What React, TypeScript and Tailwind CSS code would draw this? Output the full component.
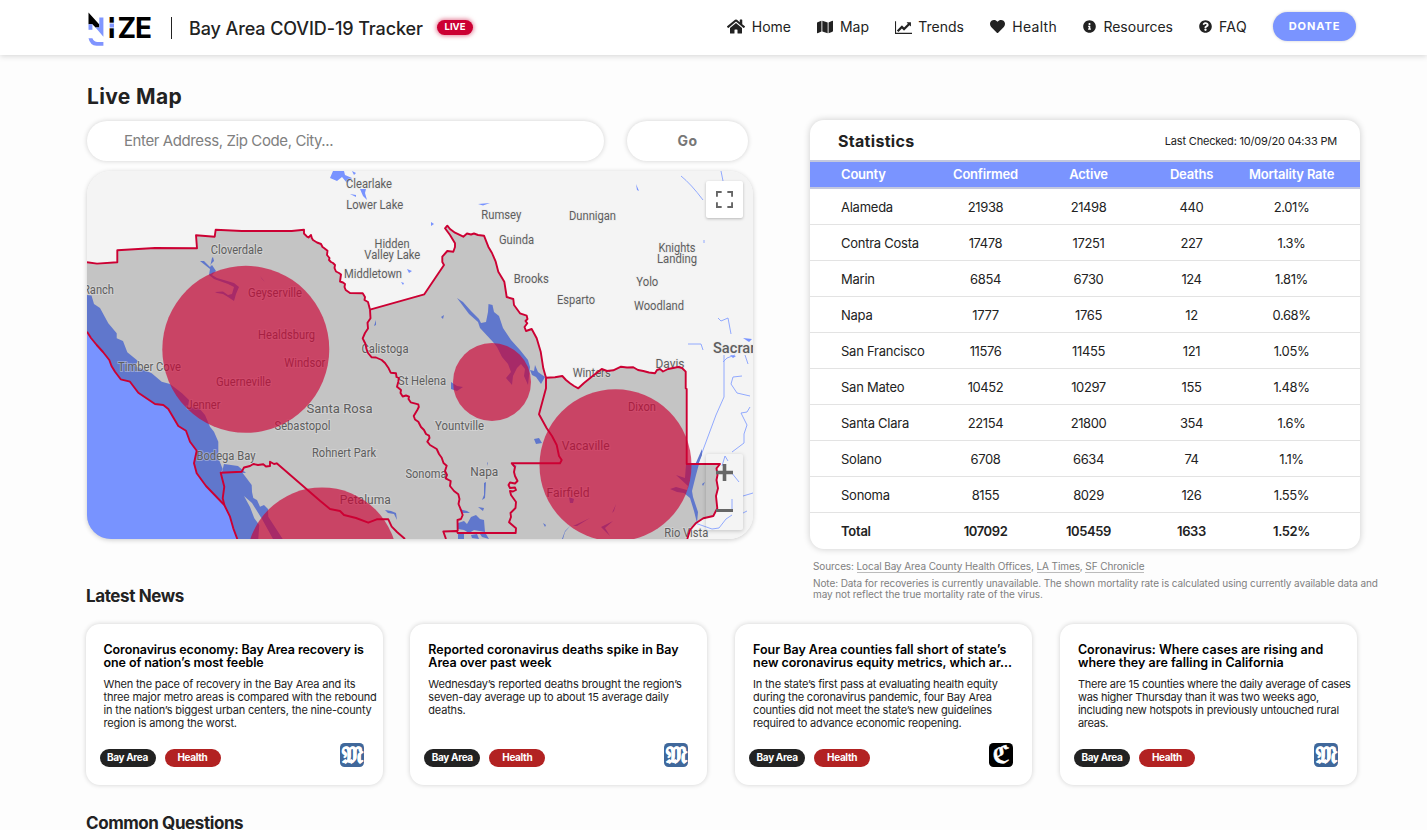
import React from "react";
import { FaHeart, FaHome, FaInfoCircle, FaMap, FaQuestionCircle } from "react-icons/fa";

function ChartIcon({ className }: { className?: string }) {
  return (
    <svg viewBox="0 0 2048 1664" className={className} fill="currentColor">
      <path d="M2048 1536v128h-2048v-1536h128v1408h1920zM1920 288v435q0 21-19.5 29.5t-35.5-7.5l-121-121-633 633q-10 10-23 10t-23-10l-233-233-416 416-192-192 585-585q10-10 23-10t23 10l233 233 464-464-121-121q-16-16-7.5-35.5t29.5-19.5h435q14 0 23 9t9 23z" />
    </svg>
  );
}

function Logo() {
  return (
    <svg viewBox="0 0 64 36" className="h-9 w-16 overflow-visible" aria-label="NIZE">
      <path d="M1.5 2.5 L12.3 14.5 L12.3 17.6 L8.5 17.6 L5.4 14.3 L1.5 14.3 Z" fill="#000" />
      <path d="M1.5 14.3 L5.4 14.3 L5.4 19.8 L1.5 19.8 Z" fill="#7f96ff" />
      <path d="M12.3 7.5 L16.4 7.5 L16.4 26.8 L8.5 17.6 L12.3 17.6 Z" fill="#7f96ff" />
      <path d="M1.5 28.2 L5.4 28.2 Q7 32 10.6 32 L16.4 32 L16.4 35.8 L9.5 35.8 Q3 35.2 1.5 28.2 Z" fill="#8094ff" />
      <text y="28" x="20.7 30.4 47.9" fontFamily="Inter, sans-serif" fontWeight="700" fontSize="28">
        IZE
      </text>
      <rect x="22" y="12.7" width="6" height="5.6" fill="#fff" />
      <rect x="22.7" y="13.5" width="4.3" height="4" fill="#7f96ff" />
    </svg>
  );
}

function Header() {
  return (
    <header className="relative z-10 flex h-[55px] shrink-0 items-center bg-white pr-[71px] pl-[87px] shadow-[0_1px_6px_rgba(0,0,0,0.17)]">
      <Logo />
      <div className="ml-5 h-[22px] w-px bg-[#222]" />
      <h1 className="ml-[17px] w-[248px] pt-px text-[18px] font-medium tracking-[-0.1px] whitespace-nowrap">
        Bay Area COVID-19 Tracker
      </h1>
      <span className="mb-px flex h-[15px] w-[36px] items-center justify-center rounded-full bg-[#cc0033] text-[9.5px] leading-none font-bold text-white shadow-[0_0_4px_1px_rgba(204,0,51,0.5)]">
        LIVE
      </span>
      <nav className="mb-[2px] ml-auto flex items-center gap-[26px] text-[14px] whitespace-nowrap">
        <a className="flex w-16 items-center justify-between">
          <FaHome className="h-[17px] w-[18px]" />
          <span>Home</span>
        </a>
        <a className="flex w-[52px] items-center justify-between">
          <FaMap className="h-4 w-[16px]" />
          <span>Map</span>
        </a>
        <a className="flex w-[69px] items-center justify-between">
          <ChartIcon className="h-[14px] w-[17px]" />
          <span>Trends</span>
        </a>
        <a className="flex w-[67px] items-center justify-between">
          <FaHeart className="size-[15px]" />
          <span className="tracking-[0.3px]">Health</span>
        </a>
        <a className="flex w-[90px] items-center justify-between">
          <FaInfoCircle className="size-[13px]" />
          <span>Resources</span>
        </a>
        <a className="flex w-12 items-center justify-between">
          <FaQuestionCircle className="size-[13px]" />
          <span className="tracking-[0.4px]">FAQ</span>
        </a>
        <button className="mb-px h-[29px] w-[83px] rounded-full bg-[#7a94ff] text-[11px] font-bold tracking-[0.9px] text-white shadow-[0_0_3px_rgba(0,0,0,0.2)]">
          DONATE
        </button>
      </nav>
    </header>
  );
}

type Label = [name: string, cx: number, cy: number, width: number, size?: number];

const labels: Label[] = [
  ["Clearlake", 369, 184, 46],
  ["Lower Lake", 374.7, 205, 57],
  ["Rumsey", 501.3, 215, 40],
  ["Dunnigan", 592.5, 216, 47],
  ["Guinda", 516.5, 240.5, 35],
  ["Hidden", 392, 244, 35],
  ["Valley Lake", 392.3, 255, 56],
  ["Middletown", 373, 274, 58],
  ["Knights", 677, 248, 37],
  ["Landing", 677, 259, 40],
  ["Brooks", 531.3, 279.5, 35],
  ["Yolo", 647.3, 282, 22],
  ["Esparto", 576, 300, 38],
  ["Woodland", 659, 306, 50],
  ["Cloverdale", 236.7, 250.5, 52],
  ["Geyserville", 275, 293.5, 54],
  ["Ranch", 98.5, 290, 31],
  ["Healdsburg", 286.6, 335.5, 57],
  ["Windsor", 304.8, 363, 41],
  ["Timber Cove", 149.5, 367, 63],
  ["Guerneville", 243.5, 382.5, 55],
  ["Jenner", 203.5, 405.5, 34],
  ["Santa Rosa", 339.5, 409, 66, 13.5],
  ["Sebastopol", 302.5, 426.5, 56],
  ["Bodega Bay", 226, 456, 59],
  ["Rohnert Park", 344, 453.5, 64],
  ["Petaluma", 365.3, 500, 51],
  ["Sonoma", 426, 474, 41],
  ["Napa", 484.3, 471.5, 28, 13],
  ["Yountville", 459.5, 426.5, 49],
  ["St Helena", 422, 381, 48],
  ["Calistoga", 385, 349.5, 47],
  ["Winters", 591.7, 373, 38],
  ["Davis", 670, 364, 29],
  ["Dixon", 642, 407.5, 28],
  ["Vacaville", 585.7, 446, 48],
  ["Fairfield", 568, 492.5, 43, 12.5],
  ["Rio Vista", 686.3, 533, 44],
  ["Sacramento", 752.5, 348.5, 79, 14.5],
];

const sonomaNorth =
  "87,262.3 97,263.6 117.3,262.3 117.3,250.3 155,248 197,248.3 196,235.3 214.7,236.7 215.7,229.7 241.7,231 291.7,231 304,229.7 304,233.5 307,236.7 308.5,237.5 311,235 311.8,238 313,240 317,242.5 321,244 322.5,247 324,248 327.5,250.7 327,255 329.5,258 329,260 331,262 333,263 335,265 334.5,268 336,271.5 339,273 341,274.5 340,281.5 343,282.5 345,284 344.5,287 345.7,290 350,293 362.7,293.3 365,297 364.5,300 368,302 370,309.7";
const sonomaNapa =
  "370,309.7 370.5,318.3 367.5,322.7 368,328.5 365,333 362.7,338.3 365.5,344 366.5,349 368,353 371.7,357.3 376,357.5 381.7,360 385,363 388.3,367.7 390.7,372.7 396,373.3 396.5,377 398.8,378 398.3,381.7 397,386.7 401,390 400.5,393 402.7,396.5 406,395.5 409,396.7 408.5,399 410.7,402.3 418.3,404.3 418.8,407 417.3,410 413.7,416 415,419.5 418.3,421.7 421,427 424,430 426,434 429,435.7 429.5,438 427.3,441.7 430,445 436.7,449 439,454 441.7,457.7 443.5,463 446.7,465.7 445,471 447,475 445.7,478.3 450.7,481 450,486 454,491 458.3,494.3 459.5,499 458.5,504 461,510 462.7,515 461,519 457.5,520 457.7,531";
const napaNorth =
  "370,309.7 424.3,294.3 444,265 442.3,262 442.3,256.7 447.3,251 453.3,251.7 455,247 455,243.3 450,235 445,228.3 447.3,225.7 450,229 455,232.7 463.3,236.7 467,233.5 471,234.5 474,233.5 478,235 484,235.7 488.3,246.7 492,253 495.7,261.7 498.3,271.7 504.3,281.7 506.7,297 513.3,299 514,305 520,313.3 526.7,315.7 527.5,319 525.5,321 527.3,323.3 524.5,327 526,331 531.7,329 536.7,338.3 540.7,351.7 543.3,368.3 546,377.7";
const napaSolano =
  "546,377.7 546,388.3 539,414.3 546.7,428.3 552,436 556.7,445 559,456 561.7,460 560,463.3 511.7,463.3 515,467 514,472 515,476 517.5,481 515,483.5 510,482.5 508.5,485 510,488 515,487.5 516,490 513,491.5 510,491 511,495 516,502 515.5,508 510.5,513 511,517 509,522.3 516,528.3 515.7,533 457.7,533 457,531 443.3,531.5 446,539";
const solanoNorth =
  "546,377.7 555,377.3 562.3,376 566,380 570,383.3 574,386 578.3,388.3 584,383 591.7,376.7 601.7,369 607,371 613.3,370.3 621,366.7 627,367.5 633.3,367.3 638,370 643.3,371 649,372.5 655,373.3 657,370 660,369 663,371.5 668,369 678.3,367 682,368 685.7,371.7 685.7,388.3 686.7,389 686.7,464 720,464 716.5,468.3 717.5,475 716.5,480 718,488.3 716,496 717.3,508.3 713.3,516 703.3,518.3 695.7,523.3 690,530 687.3,539";
const coast =
  "87,331.7 91,338 96.7,345 103,352 109.3,360 111.5,366 115,371.7 120.7,379.3 130,381.7 138.3,392.7 155,404 163.3,405 168.3,409 178.3,426 186,430.7 190,441.7 196.7,450.7 194,463.3 196.7,473.3 206,486 224.3,505 230,516.7 233.3,528.3 237.3,539";
const marin =
  "224.3,505 222.7,498.3 224.3,486.7 220.7,472.7 241.7,471.7 244,467.5 250,466 253.3,464 258,465 263.3,464.3 266,466.5 270,466 270,461.7 274,464 276.7,463.3 320,500.7 330,509 340,511 344,515 356,518 368.3,522.7 376.7,519.3 388.3,519.3 391.7,526.7 397,532 405,539";
const land = `${sonomaNorth} ${napaNorth} ${solanoNorth} 87,539`;

const circle = "fill-[#cc0033]/65";

function RegionMap() {
  return (
    <svg viewBox="87 171 666 368" className="h-full w-full" shapeRendering="geometricPrecision">
      <rect x="87" y="171" width="666" height="368" fill="#f4f4f4" />
      <polygon points={land} fill="#c4c4c4" />

      {/* lakes outside the covered counties */}
      <g fill="#7893ff">
        <path d="M333 171H344L345 175 352 178 347 183 342 177 337 181 330 178ZM352 171L356 173 354 175ZM360 189L366 189 365 193 367 200 363 196ZM350 194L356 195 356 197ZM431 222L434 224 431 226ZM407 269L412 271 409 273ZM401 282L404 283 403 285Z" />
        <path d="M478 204L490 203 483 205.5ZM636 184L639 191 637 190ZM743 338L752 339 749 342ZM730 355L736 356 733 358Z" />
      </g>
      <g fill="none" stroke="#86a0ff" strokeWidth="0.9">
        <path d="M681 176Q691 184 703 200M721 171L723 181M704 240V243M718 318L721 321 728 318 731 334M688 344H701L703 350" />
        <path d="M745 355L748 364M742 376L733 377 731 384 737 393 750 396M750 407L747 412 741 413 747 425 744 434 744 443 732 452" />
        <path d="M724 355V397L716 415 703 450 697 466M723 362L727 358 735 355M722 466L725 456 728 461M731 472L739 482M695 523L712 529 719 528 726 519 732 515M732 499V510M743 496L753 493M743 513L747 511" />
      </g>

      {/* ocean and inland water */}
      <polygon points={`${coast} 87,539`} fill="#7893ff" />
      <path
        d="M87 295L91.5 295.5 94 304 100 308 108.3 323.3 116.7 333.3 116.7 338.3 123 341 127.3 352.3 138 361 135 366 151.7 373.3 161.7 381.7 170 384 182 393.3 189 400 188 407 199 408 205 415 210 426.7 214 431.7 218.3 441.7 218.3 458 222.7 469 220.7 473 241.7 471.7 251.7 485 252 492 253.3 498 257 500 260 506.7 264 505 268 509 268.3 516.7 282.7 539H237.3L233.3 528.3 230 516.7 224.3 505 206 486 196.7 473.3 194 463.3 196.7 450.7 190 441.7 186 430.7 178.3 426 168.3 409 163.3 405 155 404 138.3 392.7 130 381.7 120.7 379.3 115 371.7 109.3 360 96.7 345 87 331.7Z"
        fill="#6077cc"
      />
      <path d="M224 464L238 466 246 473 222 472Z" fill="#6077cc" />
      <path d="M244 496L250 507 254.3 518.3 259.3 525 258.3 539H273L262 519 252 503Z" fill="#c4c4c4" />
      <g fill="#6077cc">
        <path d="M200 261L204 261 210 267 212 265 216 271 212 275 217 278 234 283 239 287 236 294 234 301 228 297 223 294 217 293 215 292 223 291.5 228 295 232 294 234 287 228 284 214 279 209 275 210 269ZM213 257L214 261 211 264 210 267 212 258Z" />
        <path d="M457 298L463 302 471 311 479 319 481 323 486 322 488 312 488.5 304 492.5 305 494 312 499 316 503 328 511 340 520 350 528 360 530 367 528 385 524 376 525 369 521 364 517 368 513 376 512 385 506 378 511 372 508 364 502 357 497 347 493 342 480 328 478 322 469 314Z" />
        <path d="M530 370L534 371 535 365 538 372 545 377 541 384 536 377 532 375ZM451 382L457 386 463 387 457 391 451 389ZM374 326L376 320 376 325ZM441 317L444 315 443 319ZM534 439L539 438 542 443 536 444ZM512 464L517 466 514 467Z" />
        <path d="M487 462L488 463 488 466ZM484 483L486 482 485 498 482 500 484 495ZM459 509L467 511 470 513 463 513ZM478 507L484 508 483 511ZM458 523L464 521 467 524 471 517 476 515 480 519 484 520 485 532 474 530 469 533 464 530 458 529ZM458 534H464V539H458ZM471 535L477 534 479 539 472 538ZM480 534H486L489 539 482 537ZM385 510L391 511 396 513 397 520 394 514 388 513Z" />
        <path d="M686 464H699L696 475 692 491 693 497 698 512 697 523 694 511 690 498 684 493 677 492 670 489 676 487 687 490 688 486 676 475 685 478ZM702 449L702 455 698 465 695 465Z" />
        <path d="M569 497L574 499 573 503 570 503ZM543 523L546 525 545 527ZM562 539L565 531 571 525 565 532 563 539ZM573 526L590 518 577 526ZM601 527L613 521 605 528 610 536ZM612 513L616 504 614 511ZM642 477L650 479ZM702 484L705 482 703 486ZM260 276L265 282 262 279Z" />
      </g>

      <g fontFamily="Roboto, sans-serif" textAnchor="middle" fill="#5e5e5e">
        {labels.map(([name, cx, cy, width, size = 12]) => (
          <text
            key={name}
            x={cx}
            y={cy + size * 0.33}
            fontSize={size}
            textLength={width}
            lengthAdjust="spacingAndGlyphs"
            fontWeight={name === "Sacramento" ? 500 : 400}
            stroke="#e6e6e6"
            strokeOpacity="0.4"
            strokeWidth="2"
            paintOrder="stroke"
          >
            {name}
          </text>
        ))}
      </g>

      <g fill="none" stroke="#cc0033" strokeWidth="1.9" strokeLinejoin="round">
        <polyline points={sonomaNorth} />
        <polyline points={sonomaNapa} />
        <polyline points={napaNorth} />
        <polyline points={napaSolano} />
        <polyline points={solanoNorth} />
        <polyline points={coast} />
        <polyline points={marin} />
      </g>

      <circle cx="245.8" cy="349.3" r="83.5" className={circle} />
      <circle cx="492" cy="382" r="39" className={circle} />
      <circle cx="615.5" cy="465.3" r="76" className={circle} />
      <circle cx="322" cy="563" r="75.6" className={circle} />
    </svg>
  );
}

function MapCard() {
  return (
    <div className="relative mt-[10px] h-[368px] w-[666px] overflow-hidden rounded-[24px] shadow-[0_1px_5px_rgba(0,0,0,0.2)]">
      <RegionMap />
      <button className="absolute top-[10px] right-[10px] flex size-[37px] items-center justify-center rounded-[2px] bg-white shadow-[0_1px_3px_rgba(0,0,0,0.25)]">
        <svg viewBox="0 0 18 18" className="mb-px size-[17px]" fill="#666">
          <path d="M0 0h6v2H2v4H0zM18 0v6h-2V2h-4V0zM0 18v-6h2v4h4v2zM18 18h-6v-2h4v-4h2z" />
        </svg>
      </button>
      <div className="absolute right-[10px] bottom-[9px] flex h-[76px] w-[37px] flex-col items-center justify-between rounded-[2px] pt-[10px] pb-[18px] shadow-[0_1px_4px_rgba(0,0,0,0.2)]">
        <svg viewBox="0 0 17 17" className="size-[17px]" fill="#666">
          <path d="M6.7 0h3.6v6.7H17v3.6h-6.7V17H6.7v-6.7H0V6.7h6.7z" />
        </svg>
        <div className="h-[3.5px] w-[17px] bg-[#666]" />
      </div>
    </div>
  );
}

const rows = [
  ["Alameda", "21938", "21498", "440", "2.01%"],
  ["Contra Costa", "17478", "17251", "227", "1.3%"],
  ["Marin", "6854", "6730", "124", "1.81%"],
  ["Napa", "1777", "1765", "12", "0.68%"],
  ["San Francisco", "11576", "11455", "121", "1.05%"],
  ["San Mateo", "10452", "10297", "155", "1.48%"],
  ["Santa Clara", "22154", "21800", "354", "1.6%"],
  ["Solano", "6708", "6634", "74", "1.1%"],
  ["Sonoma", "8155", "8029", "126", "1.55%"],
  ["Total", "107092", "105459", "1633", "1.52%"],
];

const columns = "grid grid-cols-[93px_103px_103px_103px_97px] items-center pl-[31px] text-center";

function Statistics() {
  return (
    <section className="w-[568px]">
      <div className="h-[429px] w-[550px] overflow-hidden rounded-[14px] bg-white shadow-[0_0_7px_rgba(0,0,0,0.2)]">
        <div className="flex h-10 items-center justify-between pt-[2px] pr-[23px] pl-7">
          <h2 className="text-[16px] font-bold tracking-[0.3px]">Statistics</h2>
          <span className="pt-px text-[11px] tracking-[-0.19px]">Last Checked: 10/09/20 04:33 PM</span>
        </div>
        <div
          className={`${columns} h-[29px] border-y-2 border-[#c3c8de] bg-[#7a94ff] pt-px text-[13px] font-semibold tracking-[-0.2px] whitespace-nowrap text-white`}
        >
          <span className="text-left">County</span>
          <span>Confirmed</span>
          <span>Active</span>
          <span>Deaths</span>
          <span>Mortality Rate</span>
        </div>
        <div className="divide-y divide-[#e3e3e3]">
          {rows.map((row) => (
            <div
              key={row[0]}
              className={`${columns} h-9 pt-[2px] text-[13px] tracking-[-0.4px] whitespace-nowrap ${row[0] === "Total" ? "font-semibold" : ""}`}
            >
              {row.map((cell, i) => (
                <span key={i} className={i === 0 ? "text-left tracking-[-0.25px]" : ""}>
                  {cell}
                </span>
              ))}
            </div>
          ))}
        </div>
      </div>
      <div className="pt-[12px] pl-[3px] text-[10px] leading-[11px] tracking-[-0.1px] text-[#808080]">
        <p>
          Sources: <a className="border-b border-[#bbb]">Local Bay Area County Health Offices</a>,{" "}
          <a className="border-b border-[#bbb]">LA Times</a>, <a className="border-b border-[#bbb]">SF Chronicle</a>
        </p>
        <p className="mt-[6px] whitespace-nowrap">
          Note: Data for recoveries is currently unavailable. The shown mortality rate is calculated using currently
          available data and
          <br />
          may not reflect the true mortality rate of the virus.
        </p>
      </div>
    </section>
  );
}

const news = [
  {
    title: ["Coronavirus economy: Bay Area recovery is", "one of nation’s most feeble"],
    body: [
      "When the pace of recovery in the Bay Area and its",
      "three major metro areas is compared with the rebound",
      "in the nation’s biggest urban centers, the nine-county",
      "region is among the worst.",
    ],
    source: "M",
    titleTracking: "tracking-[-0.1px]",
    bodyTracking: "tracking-[-0.18px]",
  },
  {
    title: ["Reported coronavirus deaths spike in Bay", "Area over past week"],
    body: [
      "Wednesday’s reported deaths brought the region’s",
      "seven-day average up to about 15 average daily",
      "deaths.",
    ],
    source: "M",
    titleTracking: "tracking-[0px]",
    bodyTracking: "tracking-[-0.18px]",
  },
  {
    title: ["Four Bay Area counties fall short of state’s", "new coronavirus equity metrics, which ar..."],
    body: [
      "In the state’s first pass at evaluating health equity",
      "during the coronavirus pandemic, four Bay Area",
      "counties did not meet the state’s new guidelines",
      "required to advance economic reopening.",
    ],
    source: "C",
    titleTracking: "tracking-[-0.03px]",
    bodyTracking: "tracking-[-0.22px]",
  },
  {
    title: ["Coronavirus: Where cases are rising and", "where they are falling in California"],
    body: [
      "There are 15 counties where the daily average of cases",
      "was higher Thursday than it was two weeks ago,",
      "including new hotspots in previously untouched rural",
      "areas.",
    ],
    source: "M",
    titleTracking: "tracking-[0.01px]",
    bodyTracking: "tracking-[-0.26px]",
  },
];

function SourceBadge({ source }: { source: string }) {
  return (
    <svg viewBox="0 0 24 24" className="size-6">
      <rect width="24" height="24" rx="4.5" fill={source === "M" ? "#40689b" : "#000"} />
      {source === "M" ? (
        <text
          x="12"
          y="19.8"
          textAnchor="middle"
          fontFamily="'DejaVu Sans', sans-serif"
          fontSize="22.5"
          textLength="20.5"
          lengthAdjust="spacingAndGlyphs"
          fill="#fff"
          stroke="#fff"
          strokeWidth="0.6"
        >
          𝔐
        </text>
      ) : (
        <text
          x="12"
          y="20"
          textAnchor="middle"
          fontFamily="'DejaVu Sans', sans-serif"
          fontSize="24"
          textLength="17"
          lengthAdjust="spacingAndGlyphs"
          fill="#fff"
          stroke="#fff"
          strokeWidth="0.5"
        >
          ℭ
        </text>
      )}
    </svg>
  );
}

function NewsCard({ title, body, source, titleTracking, bodyTracking }: (typeof news)[number]) {
  return (
    <article className="flex h-[161px] w-[297px] flex-col rounded-[14px] bg-white pt-[19px] pl-[18px] whitespace-nowrap shadow-[0_0_5px_rgba(0,0,0,0.18)]">
      <h3 className={`text-[12.5px] leading-[13px] font-semibold text-black ${titleTracking}`}>
        {title.map((line) => (
          <span key={line} className="block">
            {line}
          </span>
        ))}
      </h3>
      <p className={`mt-[9px] h-[52px] text-[11px] leading-[13px] ${bodyTracking}`}>
        {body.map((line) => (
          <span key={line} className="block">
            {line}
          </span>
        ))}
      </p>
      <div className="mt-[13px] -ml-1 flex items-center pr-[19px] text-[10px] font-bold tracking-[-0.35px] text-white">
        <span className="mt-[5px] flex h-[18px] w-14 items-center justify-center rounded-full bg-[#222]">Bay Area</span>
        <span className="mt-[5px] ml-[9px] flex h-[18px] w-14 items-center justify-center rounded-full bg-[#b22222]">
          Health
        </span>
        <span className="ml-auto">
          <SourceBadge source={source} />
        </span>
      </div>
    </article>
  );
}

export default function App() {
  return (
    <div className="flex h-[830px] w-[1427px] flex-col overflow-hidden bg-[#fdfdfd] font-[Inter,sans-serif] text-[#222]">
      <Header />
      <main className="flex flex-col pl-[86px]">
        <div className="flex h-[514px] gap-[57px]">
          <section className="w-[667px] pt-[27px] pl-px">
            <h2 className="h-[39px] text-[21px] leading-[30px] font-bold tracking-[0.35px]">Live Map</h2>
            <div className="flex gap-[23px]">
              <div className="flex h-10 w-[517px] items-center rounded-full bg-white pl-[37px] text-[15px] tracking-[-0.4px] text-[#808080] shadow-[0_0_5px_rgba(0,0,0,0.18)]">
                Enter Address, Zip Code, City...
              </div>
              <button className="h-10 w-[121px] rounded-full bg-white pb-px text-[14px] font-bold tracking-[0.4px] text-[#777] shadow-[0_0_5px_rgba(0,0,0,0.18)]">
                Go
              </button>
            </div>
            <MapCard />
          </section>
          <div className="pt-[65px]">
            <Statistics />
          </div>
        </div>
        <h2 className="mt-[15px] text-[17px] leading-6 font-bold tracking-[-0.39px]">Latest News</h2>
        <div className="-ml-[0.5px] mt-4 flex gap-[27.8px]">
          {news.map((item) => (
            <NewsCard key={item.title[0]} {...item} />
          ))}
        </div>
        <h2 className="mt-[26px] text-[17px] leading-6 font-bold tracking-[-0.42px]">Common Questions</h2>
      </main>
    </div>
  );
}
